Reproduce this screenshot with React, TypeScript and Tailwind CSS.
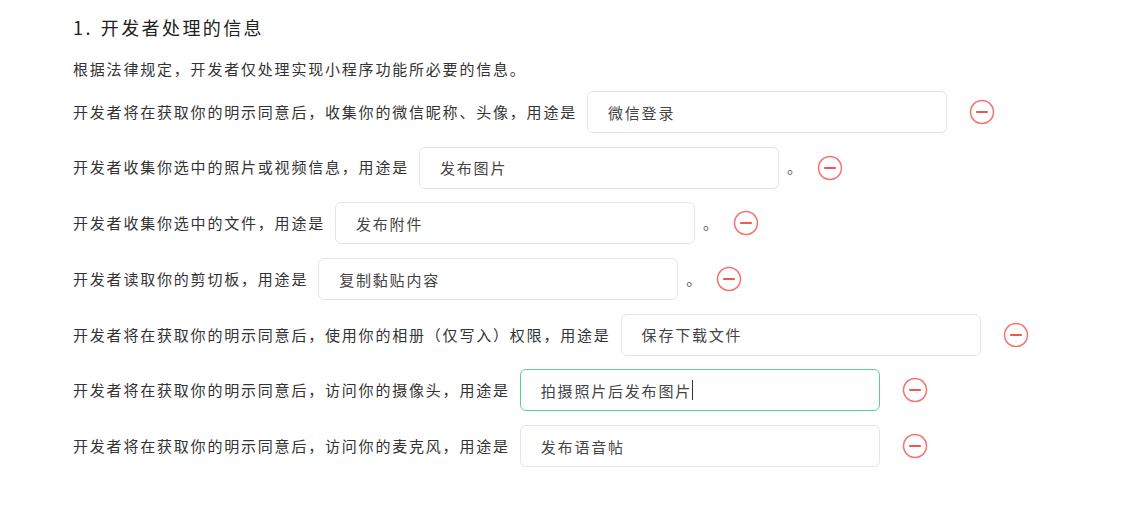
import { useState } from 'react';

type Purpose = {
    label: string;
    value: string;
    period?: boolean;
};

const purposes: Purpose[] = [
    { label: '开发者将在获取你的明示同意后，收集你的微信昵称、头像，用途是', value: '微信登录' },
    { label: '开发者收集你选中的照片或视频信息，用途是', value: '发布图片', period: true },
    { label: '开发者收集你选中的文件，用途是', value: '发布附件', period: true },
    { label: '开发者读取你的剪切板，用途是', value: '复制黏贴内容', period: true },
    { label: '开发者将在获取你的明示同意后，使用你的相册（仅写入）权限，用途是', value: '保存下载文件' },
    { label: '开发者将在获取你的明示同意后，访问你的摄像头，用途是', value: '拍摄照片后发布图片' },
    { label: '开发者将在获取你的明示同意后，访问你的麦克风，用途是', value: '发布语音帖' },
];

// row that is being edited
const ACTIVE = 5;

function RemoveIcon() {
    return (
        <svg width="26" height="26" viewBox="0 0 26 26" fill="none">
            <circle cx="13" cy="13" r="11.5" stroke="#f87171" strokeWidth="1.5" />
            <line x1="8" y1="13" x2="18" y2="13" stroke="#f25555" strokeWidth="2.2" strokeLinecap="round" />
        </svg>
    );
}

export default function App() {
    const [values, setValues] = useState(purposes.map((p) => p.value));

    return (
        <div
            className="w-[1128px] h-[522px] bg-white text-[#333] pl-[73px] pt-[13px]"
            style={{ fontFamily: '"Noto Sans CJK SC", "Noto Sans", sans-serif' }}
        >
            <h2 className="text-[18px] leading-[28px] tracking-[2.4px] text-[#222]">
                1.<span className="ml-[8px]">开发者处理的信息</span>
            </h2>
            <p className="mt-4 text-[15px] leading-[24px] tracking-[1.8px]">
                根据法律规定，开发者仅处理实现小程序功能所必要的信息。
            </p>

            <div className="mt-[10px] flex flex-col gap-[13.7px]">
                {purposes.map((item, i) => (
                    <div key={item.label} className="flex items-center h-[42px]">
                        <span className="text-[15px] tracking-[1.8px] whitespace-nowrap">{item.label}</span>
                        <div className="relative ml-[10px]">
                            <input
                                value={values[i]}
                                onChange={(e) => {
                                    const next = [...values];
                                    next[i] = e.target.value;
                                    setValues(next);
                                }}
                                className={`block w-[360px] h-[42px] rounded-md border bg-white pl-5 text-[15px] tracking-[1.8px] text-[#444] outline-none caret-transparent ${i === ACTIVE ? 'border-[#5ad194]' : 'border-[#e5e5e5]'}`}
                            />
                            {i === ACTIVE && (
                                <span className="absolute left-[172px] top-[11px] w-px h-[20px] bg-[#333]" />
                            )}
                        </div>
                        {item.period ? (
                            <>
                                <span className="ml-2 w-[14px] text-[15px] text-[#555]">。</span>
                                <span className="ml-[16px] flex">
                                    <RemoveIcon />
                                </span>
                            </>
                        ) : (
                            <span className="ml-[22px] flex">
                                <RemoveIcon />
                            </span>
                        )}
                    </div>
                ))}
            </div>
        </div>
    );
}
